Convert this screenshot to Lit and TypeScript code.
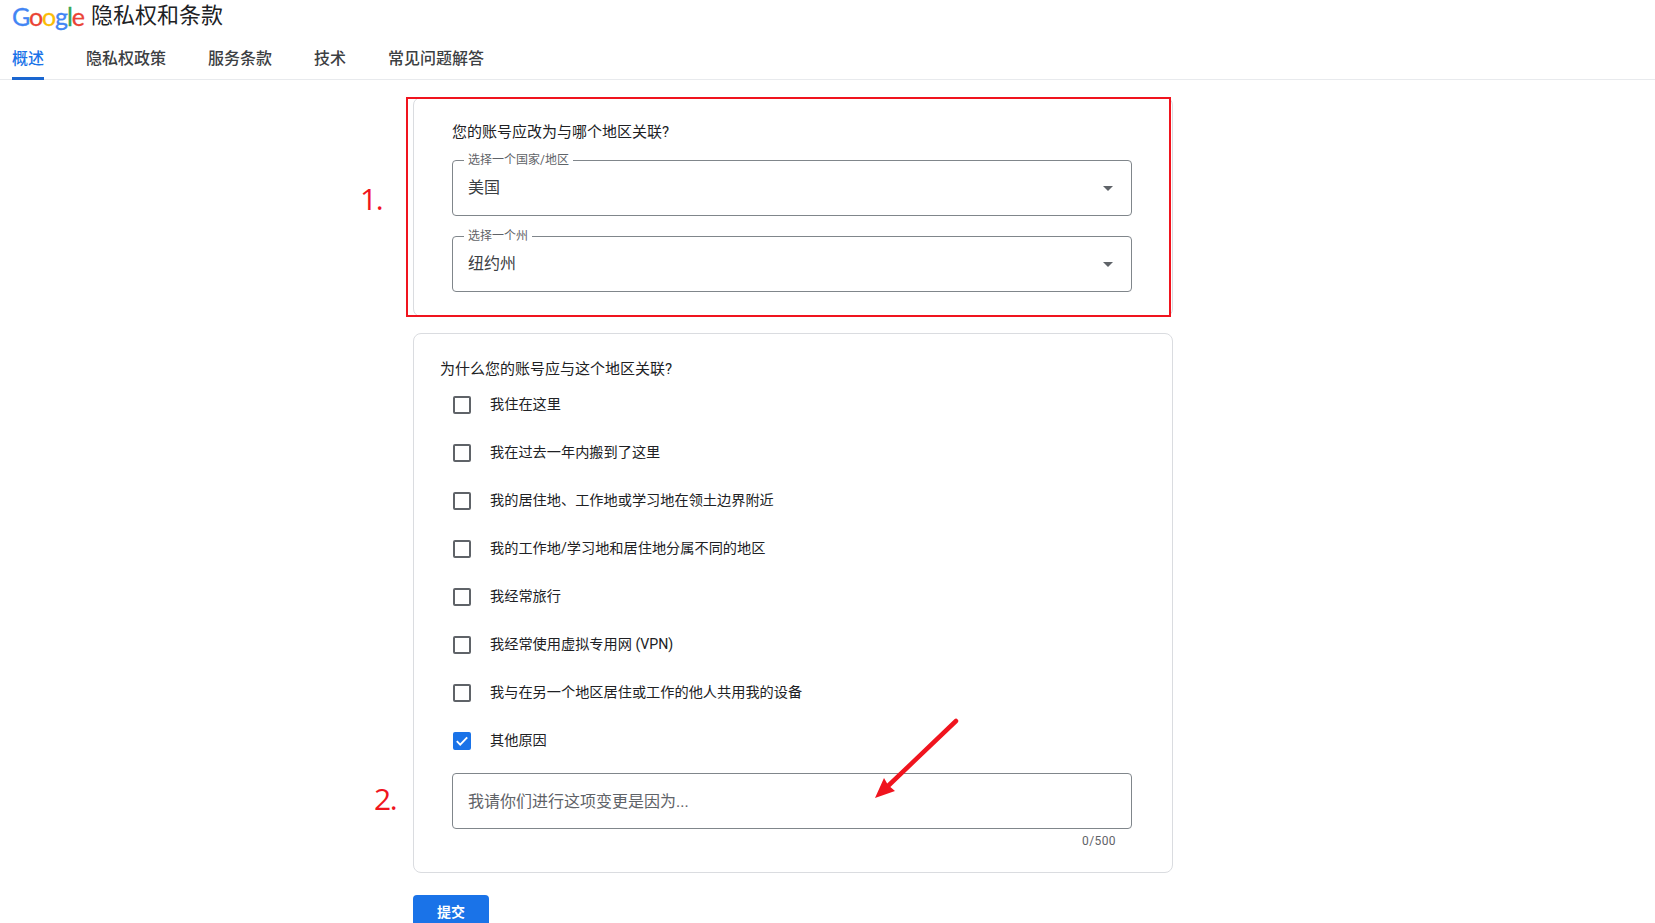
import { LitElement, html, css } from "lit";
import { customElement } from "lit/decorators.js";

const REASONS = [
  "我住在这里",
  "我在过去一年内搬到了这里",
  "我的居住地、工作地或学习地在领土边界附近",
  "我的工作地/学习地和居住地分属不同的地区",
  "我经常旅行",
  "我经常使用虚拟专用网 (VPN)",
  "我与在另一个地区居住或工作的他人共用我的设备",
  "其他原因",
];
const TABS = ["概述", "隐私权政策", "服务条款", "技术", "常见问题解答"];

@customElement("app-root")
export class AppRoot extends LitElement {
  static styles = css`
    :host {
      display: block;
      position: relative;
      height: 923px;
      overflow: hidden;
      background: #fff;
      color: #202124;
      font-family: Roboto, "Noto Sans CJK SC", sans-serif;
    }
    .header {
      box-sizing: border-box;
      height: 80px;
      padding-left: 12px;
      border-bottom: 1px solid #e8eaed;
    }
    .brand { display: flex; align-items: center; gap: 6px; height: 32px; }
    .logo {
      font-family: Lato, sans-serif;
      font-size: 25px;
      letter-spacing: -1.1px;
      -webkit-text-stroke: 0.3px;
      line-height: 32px;
      width: 73px;
      white-space: nowrap;
    }
    .b { color: #4285f4; } .r { color: #ea4335; } .y { color: #fbbc05; } .g { color: #34a853; }
    .title { font-size: 22px; line-height: 32px; color: #202124; }
    .tabs { display: flex; gap: 42px; margin-top: 4px; }
    .tab {
      box-sizing: border-box;
      height: 44px;
      padding-top: 13px;
      font-size: 16px;
      line-height: 20px;
      font-weight: 500;
      color: #3c4043;
      position: relative;
    }
    .tab.active { color: #1a73e8; border-bottom: 3px solid #1a66d0; }
    .main { margin-left: 413px; width: 760px; padding-top: 17px; }
    .card {
      box-sizing: border-box;
      border: 1px solid #dadce0;
      border-radius: 8px;
    }
    .one { height: 220px; padding: 24px 40px 0 38px; margin-bottom: 16px; }
    .q { font-size: 15px; line-height: 20px; }
    .field {
      position: relative;
      box-sizing: border-box;
      height: 56px;
      width: 680px;
      border: 1px solid #80868b;
      border-radius: 4px;
      display: flex;
      align-items: center;
      justify-content: space-between;
      padding: 0 18px 0 15px;
      font-size: 16px;
      color: #3c4043;
    }
    .one .field { margin-top: 20px; }
    .one .q + .field { margin-top: 18px; }
    .val { margin-bottom: 4px; }
    .hint { margin-bottom: 2px; }
    .field label {
      position: absolute;
      left: 11px;
      top: -8px;
      padding: 0 4px;
      background: #fff;
      font-size: 12px;
      line-height: 14px;
      color: #5f6368;
    }
    .caret {
      width: 0; height: 0;
      border-left: 5px solid transparent;
      border-right: 5px solid transparent;
      border-top: 5px solid #5f6368;
    }
    .two { height: 540px; padding: 25px 0 0 26px; }
    .list { display: flex; flex-direction: column; gap: 30px; margin: 17px 0 0 13px; }
    .row { display: flex; align-items: center; gap: 19px; height: 18px; font-size: 14.2px; color: #202124; }
    .row .txt { margin-bottom: 4px; }
    .box {
      box-sizing: border-box;
      width: 18px; height: 18px;
      border: 2px solid #5f6368;
      border-radius: 2px;
      flex: none;
    }
    .box.on { background: #1a73e8; border-color: #1a73e8; display: flex; align-items: center; justify-content: center; }
    .two .field { margin: 23px 0 0 12px; color: #5f6368; }
    .count {
      width: 663px;
      margin: 5px 0 0 13px;
      text-align: right;
      font-size: 12px;
      line-height: 14px;
      letter-spacing: 0.4px;
      color: #5f6368;
    }
    .submit {
      display: block;
      margin-top: 22px;
      width: 76px;
      height: 36px;
      border: 0;
      border-radius: 4px;
      background: #1a73e8;
      color: #fff;
      font: 700 14px Roboto, "Noto Sans CJK SC", sans-serif;
      padding: 0 0 5px;
    }
    .frame {
      position: absolute;
      left: 406px; top: 97px;
      width: 765px; height: 220px;
      box-sizing: border-box;
      border: 2px solid #f0141e;
      pointer-events: none;
    }
    .mark {
      position: absolute;
      font-family: "Open Sans", sans-serif;
      font-size: 30px;
      line-height: 40px;
      letter-spacing: -1.5px;
      color: #f0141e;
    }
    .m1 { left: 360px; top: 179px; }
    .m2 { left: 374px; top: 779px; }
    .arrow { position: absolute; left: 860px; top: 710px; pointer-events: none; }
  `;

  render() {
    return html`
      <div class="header">
        <div class="brand">
          <span class="logo"><span class="b">G</span><span class="r">o</span><span class="y">o</span><span class="b">g</span><span class="g">l</span><span class="r">e</span></span>
          <span class="title">隐私权和条款</span>
        </div>
        <div class="tabs">
          ${TABS.map((t, i) => html`<div class="tab ${i === 0 ? "active" : ""}">${t}</div>`)}
        </div>
      </div>
      <div class="main">
        <div class="card one">
          <div class="q">您的账号应改为与哪个地区关联?</div>
          <div class="field"><label>选择一个国家/地区</label><span class="val">美国</span><span class="caret"></span></div>
          <div class="field"><label>选择一个州</label><span class="val">纽约州</span><span class="caret"></span></div>
        </div>
        <div class="card two">
          <div class="q">为什么您的账号应与这个地区关联?</div>
          <div class="list">
            ${REASONS.map((r, i) => html`
              <div class="row">
                ${i === REASONS.length - 1
                  ? html`<span class="box on"><svg width="14" height="14" viewBox="0 0 14 14"><path d="M1.8 7.2 5.2 10.6 12.2 3.4" fill="none" stroke="#fff" stroke-width="1.9"/></svg></span>`
                  : html`<span class="box"></span>`}
                <span class="txt">${r}</span>
              </div>`)}
          </div>
          <div class="field"><span class="hint">我请你们进行这项变更是因为...</span></div>
          <div class="count">0/500</div>
        </div>
        <button class="submit">提交</button>
      </div>
      <div class="frame"></div>
      <div class="mark m1">1.</div>
      <div class="mark m2">2.</div>
      <svg class="arrow" width="110" height="100" viewBox="860 710 110 100">
        <path d="M956 721 888 786" stroke="#f0141e" stroke-width="4.5" stroke-linecap="round" fill="none"/>
        <path d="M875 798 884 778 888 785 895 791Z" fill="#f0141e"/>
      </svg>
    `;
  }
}
